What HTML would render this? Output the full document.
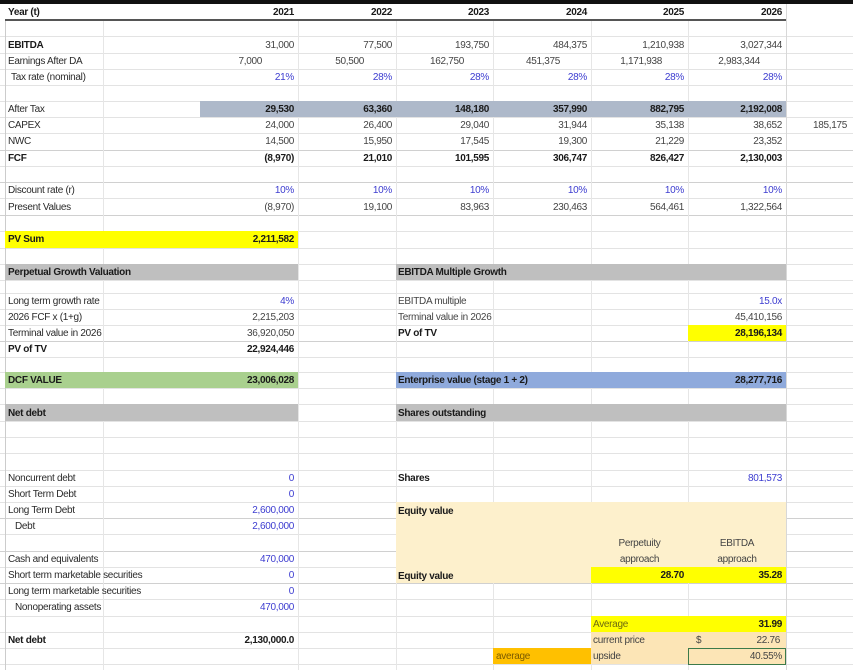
<!DOCTYPE html>
<html><head><meta charset="utf-8"><style>
body{margin:0;width:853px;height:670px;background:#fff;position:relative;overflow:hidden;font-family:"Liberation Sans",Arial,sans-serif;font-size:10px;letter-spacing:-0.3px;color:#2a2a2a}
div{position:absolute;box-sizing:border-box}
.h{height:1px;left:0;width:853px;background:#e3e3e3}
.v{width:1px;top:4px;height:666px;background:#e6e6e6}
.t{height:16px;line-height:17px;white-space:nowrap}
.r{text-align:right;padding-right:4px}
.b{font-weight:bold;color:#1a1a1a}
.bl{color:#3c3cd0}
.g{color:#444}
</style></head><body>
<!-- grid -->
<div class="h" style="top:36px"></div><div class="h" style="top:53px"></div><div class="h" style="top:69px"></div><div class="h" style="top:85px"></div><div class="h" style="top:101px"></div><div class="h" style="top:117px"></div><div class="h" style="top:133px"></div><div class="h" style="top:150px;background:#d0d0d0"></div><div class="h" style="top:166px"></div><div class="h" style="top:182px;background:#d0d0d0"></div><div class="h" style="top:198px"></div><div class="h" style="top:215px;background:#d0d0d0"></div><div class="h" style="top:231px"></div><div class="h" style="top:248px"></div><div class="h" style="top:264px"></div><div class="h" style="top:280px"></div><div class="h" style="top:293px"></div><div class="h" style="top:309px"></div><div class="h" style="top:325px"></div><div class="h" style="top:341px;background:#d0d0d0"></div><div class="h" style="top:357px"></div><div class="h" style="top:372px"></div><div class="h" style="top:388px"></div><div class="h" style="top:404px"></div><div class="h" style="top:421px"></div><div class="h" style="top:437px"></div><div class="h" style="top:453px"></div><div class="h" style="top:470px"></div><div class="h" style="top:486px"></div><div class="h" style="top:502px"></div><div class="h" style="top:518px;background:#d0d0d0"></div><div class="h" style="top:534px"></div><div class="h" style="top:551px;background:#d0d0d0"></div><div class="h" style="top:567px"></div><div class="h" style="top:583px;background:#d0d0d0"></div><div class="h" style="top:599px"></div><div class="h" style="top:616px"></div><div class="h" style="top:632px"></div><div class="h" style="top:648px"></div><div class="h" style="top:664px"></div>
<div class="v" style="left:5px;background:#ccc"></div><div class="v" style="left:103px"></div><div class="v" style="left:298px"></div><div class="v" style="left:396px"></div><div class="v" style="left:493px"></div><div class="v" style="left:591px"></div><div class="v" style="left:688px"></div><div class="v" style="left:786px;background:#d8d8d8"></div>
<div style="left:0;top:0;width:853px;height:4px;background:#111"></div>
<!-- fills -->
<div style="left:200px;top:101px;width:586px;height:16px;background:#aeb9ca"></div>
<div style="left:5px;top:231px;width:293px;height:17px;background:#ffff00"></div>
<div style="left:5px;top:264px;width:293px;height:16px;background:#bfbfbf"></div>
<div style="left:396px;top:264px;width:390px;height:16px;background:#bfbfbf"></div>
<div style="left:688px;top:325px;width:98px;height:16px;background:#ffff00"></div>
<div style="left:5px;top:372px;width:293px;height:16px;background:#a9d08e"></div>
<div style="left:396px;top:372px;width:390px;height:16px;background:#8faadc"></div>
<div style="left:5px;top:404px;width:293px;height:17px;background:#bfbfbf"></div>
<div style="left:396px;top:404px;width:390px;height:17px;background:#bfbfbf"></div>
<div style="left:396px;top:502px;width:390px;height:81px;background:#fdf0cc"></div>
<div style="left:591px;top:567px;width:195px;height:16px;background:#ffff00"></div>
<div style="left:591px;top:616px;width:195px;height:16px;background:#ffff00"></div>
<div style="left:591px;top:632px;width:195px;height:32px;background:#fce5b6"></div>
<div style="left:493px;top:648px;width:98px;height:16px;background:#ffc000"></div>
<div style="left:688px;top:648px;width:98px;height:17px;border:1px solid #3c7a4a"></div>
<div style="left:5px;top:4px;width:781px;height:16px;background:#fff"></div>
<div style="left:5px;top:19px;width:781px;height:2px;background:#555"></div>
<!-- header -->
<div class="t b" style="left:8px;top:4px">Year (t)</div>
<div class="t b r" style="left:200px;top:4px;width:98px">2021</div>
<div class="t b r" style="left:298px;top:4px;width:98px">2022</div>
<div class="t b r" style="left:396px;top:4px;width:97px">2023</div>
<div class="t b r" style="left:493px;top:4px;width:98px">2024</div>
<div class="t b r" style="left:591px;top:4px;width:97px">2025</div>
<div class="t b r" style="left:688px;top:4px;width:98px">2026</div>
<!-- EBITDA -->
<div class="t b" style="left:8px;top:37px">EBITDA</div>
<div class="t r g" style="left:200px;top:37px;width:98px">31,000</div><div class="t r g" style="left:298px;top:37px;width:98px">77,500</div><div class="t r g" style="left:396px;top:37px;width:97px">193,750</div><div class="t r g" style="left:493px;top:37px;width:98px">484,375</div><div class="t r g" style="left:591px;top:37px;width:97px">1,210,938</div><div class="t r g" style="left:688px;top:37px;width:98px">3,027,344</div>
<div class="t" style="left:8px;top:53px">Earnings After DA</div>
<div class="t r g" style="left:200px;top:53px;width:66px">7,000</div><div class="t r g" style="left:298px;top:53px;width:70px">50,500</div><div class="t r g" style="left:396px;top:53px;width:72px">162,750</div><div class="t r g" style="left:493px;top:53px;width:71px">451,375</div><div class="t r g" style="left:591px;top:53px;width:75px">1,171,938</div><div class="t r g" style="left:688px;top:53px;width:76px">2,983,344</div>
<div class="t" style="left:11px;top:69px">Tax rate (nominal)</div>
<div class="t r bl" style="left:200px;top:69px;width:98px">21%</div><div class="t r bl" style="left:298px;top:69px;width:98px">28%</div><div class="t r bl" style="left:396px;top:69px;width:97px">28%</div><div class="t r bl" style="left:493px;top:69px;width:98px">28%</div><div class="t r bl" style="left:591px;top:69px;width:97px">28%</div><div class="t r bl" style="left:688px;top:69px;width:98px">28%</div>
<div class="t" style="left:8px;top:101px">After Tax</div>
<div class="t r b" style="left:200px;top:101px;width:98px">29,530</div><div class="t r b" style="left:298px;top:101px;width:98px">63,360</div><div class="t r b" style="left:396px;top:101px;width:97px">148,180</div><div class="t r b" style="left:493px;top:101px;width:98px">357,990</div><div class="t r b" style="left:591px;top:101px;width:97px">882,795</div><div class="t r b" style="left:688px;top:101px;width:98px">2,192,008</div>
<div class="t" style="left:8px;top:117px">CAPEX</div>
<div class="t r g" style="left:200px;top:117px;width:98px">24,000</div><div class="t r g" style="left:298px;top:117px;width:98px">26,400</div><div class="t r g" style="left:396px;top:117px;width:97px">29,040</div><div class="t r g" style="left:493px;top:117px;width:98px">31,944</div><div class="t r g" style="left:591px;top:117px;width:97px">35,138</div><div class="t r g" style="left:688px;top:117px;width:98px">38,652</div><div class="t r g" style="left:786px;top:117px;width:67px;padding-right:6px">185,175</div>
<div class="t" style="left:8px;top:133px">NWC</div>
<div class="t r g" style="left:200px;top:133px;width:98px">14,500</div><div class="t r g" style="left:298px;top:133px;width:98px">15,950</div><div class="t r g" style="left:396px;top:133px;width:97px">17,545</div><div class="t r g" style="left:493px;top:133px;width:98px">19,300</div><div class="t r g" style="left:591px;top:133px;width:97px">21,229</div><div class="t r g" style="left:688px;top:133px;width:98px">23,352</div>
<div class="t b" style="left:8px;top:150px">FCF</div>
<div class="t r b" style="left:200px;top:150px;width:98px">(8,970)</div><div class="t r b" style="left:298px;top:150px;width:98px">21,010</div><div class="t r b" style="left:396px;top:150px;width:97px">101,595</div><div class="t r b" style="left:493px;top:150px;width:98px">306,747</div><div class="t r b" style="left:591px;top:150px;width:97px">826,427</div><div class="t r b" style="left:688px;top:150px;width:98px">2,130,003</div>
<div class="t" style="left:8px;top:182px">Discount rate (r)</div>
<div class="t r bl" style="left:200px;top:182px;width:98px">10%</div><div class="t r bl" style="left:298px;top:182px;width:98px">10%</div><div class="t r bl" style="left:396px;top:182px;width:97px">10%</div><div class="t r bl" style="left:493px;top:182px;width:98px">10%</div><div class="t r bl" style="left:591px;top:182px;width:97px">10%</div><div class="t r bl" style="left:688px;top:182px;width:98px">10%</div>
<div class="t" style="left:8px;top:199px">Present Values</div>
<div class="t r g" style="left:200px;top:199px;width:98px">(8,970)</div><div class="t r g" style="left:298px;top:199px;width:98px">19,100</div><div class="t r g" style="left:396px;top:199px;width:97px">83,963</div><div class="t r g" style="left:493px;top:199px;width:98px">230,463</div><div class="t r g" style="left:591px;top:199px;width:97px">564,461</div><div class="t r g" style="left:688px;top:199px;width:98px">1,322,564</div>
<div class="t b" style="left:8px;top:231px">PV Sum</div>
<div class="t r b" style="left:200px;top:231px;width:98px">2,211,582</div>
<div class="t b" style="left:8px;top:264px">Perpetual Growth Valuation</div>
<div class="t b" style="left:398px;top:264px">EBITDA Multiple Growth</div>
<div class="t" style="left:8px;top:293px">Long term growth rate</div><div class="t r bl" style="left:200px;top:293px;width:98px">4%</div>
<div class="t g" style="left:398px;top:293px">EBITDA multiple</div><div class="t r bl" style="left:688px;top:293px;width:98px">15.0x</div>
<div class="t" style="left:8px;top:309px">2026 FCF x (1+g)</div><div class="t r g" style="left:200px;top:309px;width:98px">2,215,203</div>
<div class="t g" style="left:398px;top:309px">Terminal value in 2026</div><div class="t r g" style="left:688px;top:309px;width:98px">45,410,156</div>
<div class="t" style="left:8px;top:325px">Terminal value in 2026</div><div class="t r g" style="left:200px;top:325px;width:98px">36,920,050</div>
<div class="t b" style="left:398px;top:325px">PV of TV</div><div class="t r b" style="left:688px;top:325px;width:98px">28,196,134</div>
<div class="t b" style="left:8px;top:341px">PV of TV</div><div class="t r b" style="left:200px;top:341px;width:98px">22,924,446</div>
<div class="t b" style="left:8px;top:372px">DCF VALUE</div><div class="t r b" style="left:200px;top:372px;width:98px">23,006,028</div>
<div class="t b" style="left:398px;top:372px">Enterprise value (stage 1 + 2)</div><div class="t r b" style="left:688px;top:372px;width:98px">28,277,716</div>
<div class="t b" style="left:8px;top:405px">Net debt</div>
<div class="t b" style="left:398px;top:405px">Shares outstanding</div>
<div class="t" style="left:8px;top:470px">Noncurrent debt</div><div class="t r bl" style="left:200px;top:470px;width:98px">0</div>
<div class="t b" style="left:398px;top:470px">Shares</div><div class="t r bl" style="left:688px;top:470px;width:98px">801,573</div>
<div class="t" style="left:8px;top:486px">Short Term Debt</div><div class="t r bl" style="left:200px;top:486px;width:98px">0</div>
<div class="t" style="left:8px;top:502px">Long Term Debt</div><div class="t r bl" style="left:200px;top:502px;width:98px">2,600,000</div>
<div class="t b" style="left:398px;top:503px">Equity value</div>
<div class="t" style="left:15px;top:518px">Debt</div><div class="t r bl" style="left:200px;top:518px;width:98px">2,600,000</div>
<div class="t g" style="left:591px;top:535px;width:97px;text-align:center">Perpetuity</div>
<div class="t g" style="left:688px;top:535px;width:98px;text-align:center">EBITDA</div>
<div class="t" style="left:8px;top:551px">Cash and equivalents</div><div class="t r bl" style="left:200px;top:551px;width:98px">470,000</div>
<div class="t g" style="left:591px;top:551px;width:97px;text-align:center">approach</div>
<div class="t g" style="left:688px;top:551px;width:98px;text-align:center">approach</div>
<div class="t" style="left:8px;top:567px">Short term marketable securities</div><div class="t r bl" style="left:200px;top:567px;width:98px">0</div>
<div class="t b" style="left:398px;top:568px">Equity value</div>
<div class="t r b" style="left:591px;top:567px;width:97px">28.70</div><div class="t r b" style="left:688px;top:567px;width:98px">35.28</div>
<div class="t" style="left:8px;top:583px">Long term marketable securities</div><div class="t r bl" style="left:200px;top:583px;width:98px">0</div>
<div class="t" style="left:15px;top:599px">Nonoperating assets</div><div class="t r bl" style="left:200px;top:599px;width:98px">470,000</div>
<div class="t" style="left:593px;top:616px;color:#6d6a10">Average</div><div class="t r b" style="left:688px;top:616px;width:98px">31.99</div>
<div class="t b" style="left:8px;top:632px">Net debt</div><div class="t r b" style="left:200px;top:632px;width:98px">2,130,000.0</div>
<div class="t g" style="left:593px;top:632px">current price</div><div class="t g" style="left:696px;top:632px">$</div><div class="t r g" style="left:688px;top:632px;width:98px;padding-right:6px">22.76</div>
<div class="t" style="left:496px;top:648px;color:#7a5a00">average</div>
<div class="t g" style="left:593px;top:648px">upside</div><div class="t r g" style="left:688px;top:648px;width:98px">40.55%</div>
</body></html>
